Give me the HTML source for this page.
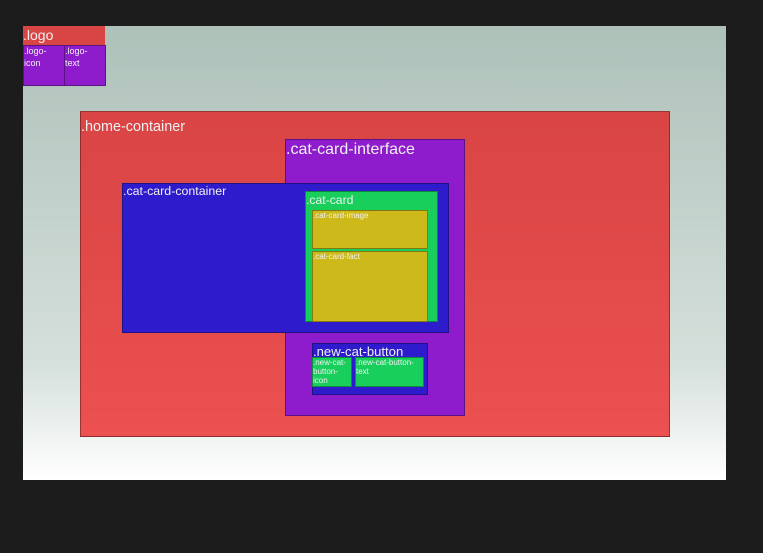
<!DOCTYPE html><html><head><style>
body{margin:0;width:763px;height:553px;background:#1c1c1c;position:relative;overflow:hidden;font-family:"Liberation Sans",sans-serif;color:#f0f0f0}
div{position:absolute;box-sizing:border-box;line-height:1.15}
.b{border:1px solid rgba(0,0,0,.35)}
.p{background:#8e1ccc}.bl{background:#2e1ccc}.g{background:#18cf5c}.y{background:#cdb919}
</style></head><body>
<div style="left:23px;top:26px;width:703px;height:454px;background:linear-gradient(#adc1b9,#d6e0dc 75%,#fff)"></div>
<div style="left:23px;top:26px;width:82px;height:19px;background:#d94444;font-size:14px;padding-top:1px">.logo</div>
<div class="p b" style="left:23px;top:45px;width:42px;height:41px;font-size:9px;line-height:1.3">.logo-<br>icon</div>
<div class="p b" style="left:64px;top:45px;width:42px;height:41px;font-size:9px;line-height:1.3">.logo-<br>text</div>
<div class="b" style="left:80px;top:111px;width:590px;height:326px;background:linear-gradient(#d94444,#ec5050);font-size:14.4px;padding-top:7px">.home-container</div>
<div class="p b" style="left:285px;top:139px;width:180px;height:277px;font-size:16px;padding-top:1px">.cat-card-interface</div>
<div class="bl b" style="left:122px;top:183px;width:327px;height:150px;font-size:12.4px">.cat-card-container</div>
<div class="g b" style="left:305px;top:191px;width:133px;height:131px;font-size:12.2px;padding-top:1px">.cat-card</div>
<div class="y b" style="left:312px;top:210px;width:116px;height:39px;font-size:8px">.cat-card-image</div>
<div class="y b" style="left:312px;top:251px;width:116px;height:71px;font-size:8px">.cat-card-fact</div>
<div class="bl b" style="left:312px;top:343px;width:116px;height:52px;font-size:13.1px">.new-cat-button</div>
<div class="g b" style="left:312px;top:357px;width:40px;height:30px;font-size:8px">.new-cat-<br>button-<br>icon</div>
<div class="g b" style="left:355px;top:357px;width:69px;height:30px;font-size:8px">.new-cat-button-<br>text</div>
</body></html>
